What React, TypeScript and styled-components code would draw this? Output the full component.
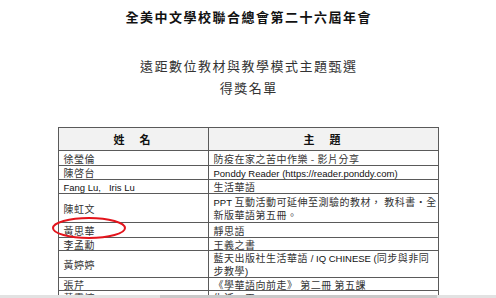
import styled, { createGlobalStyle } from "styled-components";

const GlobalStyle = createGlobalStyle`
  html, body {
    margin: 0;
    padding: 0;
    background: #fff;
    overflow: hidden;
  }
  body {
    font-family: "Noto Sans CJK TC", "Noto Sans CJK SC", sans-serif;
    color: #222;
  }
`;

const StyledPage = styled.div`
  position: relative;
  width: 496px;
  height: 298px;
  padding-top: 9px;
  box-sizing: border-box;
  overflow: hidden;
`;

const StyledHeading = styled.div<{ $bold?: boolean; $gap?: number }>`
  text-align: center;
  font-size: 13px;
  line-height: 16px;
  letter-spacing: 1.5px;
  padding-left: 1.5px;
  font-weight: ${(p) => (p.$bold ? 700 : 400)};
  color: ${(p) => (p.$bold ? "#111" : "#333")};
  margin-top: ${(p) => p.$gap || 0}px;
`;

const StyledTable = styled.table`
  margin: 31px auto 0;
  width: 381px;
  border-collapse: collapse;
  table-layout: fixed;

  th,
  td {
    border: 1px solid #5a5a5a;
    padding: 0 0 0 5px;
    font-size: 10px;
    line-height: 11px;
    letter-spacing: 0.5px;
    text-align: left;
    vertical-align: middle;
    color: #333;
    overflow: hidden;
    white-space: nowrap;
  }

  th {
    background: #f2f2f2;
    font-size: 11px;
    font-weight: 700;
    text-align: center;
    letter-spacing: 2px;
    color: #111;
    padding: 0;
  }
`;

const StyledRow = styled.tr<{ $h: number }>`
  height: ${(p) => p.$h}px;
`;

const StyledTwoLines = styled.div`
  line-height: 13px;
`;

const StyledLatin = styled.span`
  font-family: "Liberation Sans", Arial, sans-serif;
  font-size: 9.5px;
  line-height: 8px;
  letter-spacing: 0;
  color: #111;
`;

const StyledCircle = styled.svg`
  position: absolute;
  left: 51px;
  top: 216px;
  width: 76px;
  height: 24px;
  pointer-events: none;
`;

const StyledEdge = styled.div`
  position: absolute;
  left: 0;
  right: 0;
  bottom: 0;
  height: 3px;
  background: linear-gradient(
    to right,
    #e2e2e2 0,
    #e2e2e2 160px,
    #c9c9c9 160px,
    #c9c9c9 437px,
    #e2e2e2 437px
  );
`;

type Entry = { name: React.ReactNode; topic: React.ReactNode; h: number };

const entries: Entry[] = [
  { name: "徐瑩倫", topic: "防疫在家之苦中作樂 - 影片分享", h: 15 },
  {
    name: "陳啓台",
    topic: <StyledLatin>Ponddy Reader (https://reader.ponddy.com)</StyledLatin>,
    h: 14,
  },
  { name: <StyledLatin>Fang Lu,&nbsp;&nbsp; Iris Lu</StyledLatin>, topic: "生活華語", h: 14 },
  {
    name: "陳虹文",
    topic: (
      <StyledTwoLines>
        <StyledLatin>PPT </StyledLatin>互動活動可延伸至測驗的教材， 教科書‧全
        <br />
        新版華語第五冊。
      </StyledTwoLines>
    ),
    h: 29,
  },
  { name: "黃思華", topic: "靜思語", h: 15 },
  { name: "李孟勳", topic: "王義之書", h: 13 },
  {
    name: "黃婷婷",
    topic: (
      <StyledTwoLines>
        藍天出版社生活華語 <StyledLatin>/ IQ CHINESE (</StyledLatin>同步與非同
        <br />
        步教學<StyledLatin>)</StyledLatin>
      </StyledTwoLines>
    ),
    h: 27,
  },
  { name: "張芹", topic: "《學華語向前走》 第二冊 第五課", h: 13 },
  { name: "黃雲婷", topic: "生活一王", h: 14 },
];

export default function App() {
  return (
    <>
      <GlobalStyle />
      <StyledPage>
        <StyledHeading $bold>全美中文學校聯合總會第二十六屆年會</StyledHeading>
        <StyledHeading $gap={33}>遠距數位教材與教學模式主題甄選</StyledHeading>
        <StyledHeading $gap={6}>得獎名單</StyledHeading>
        <StyledTable>
          <colgroup>
            <col style={{ width: 150 }} />
            <col />
          </colgroup>
          <thead>
            <StyledRow $h={23}>
              <th>姓　名</th>
              <th>主　題</th>
            </StyledRow>
          </thead>
          <tbody>
            {entries.map((e, i) => (
              <StyledRow $h={e.h} key={`entry-${i}`}>
                <td>{e.name}</td>
                <td>{e.topic}</td>
              </StyledRow>
            ))}
          </tbody>
        </StyledTable>
        <StyledCircle viewBox="0 0 76 24">
          <ellipse cx="38" cy="12" rx="36" ry="10" fill="none" stroke="#e3141c" strokeWidth="2" />
        </StyledCircle>
        <StyledEdge />
      </StyledPage>
    </>
  );
}
